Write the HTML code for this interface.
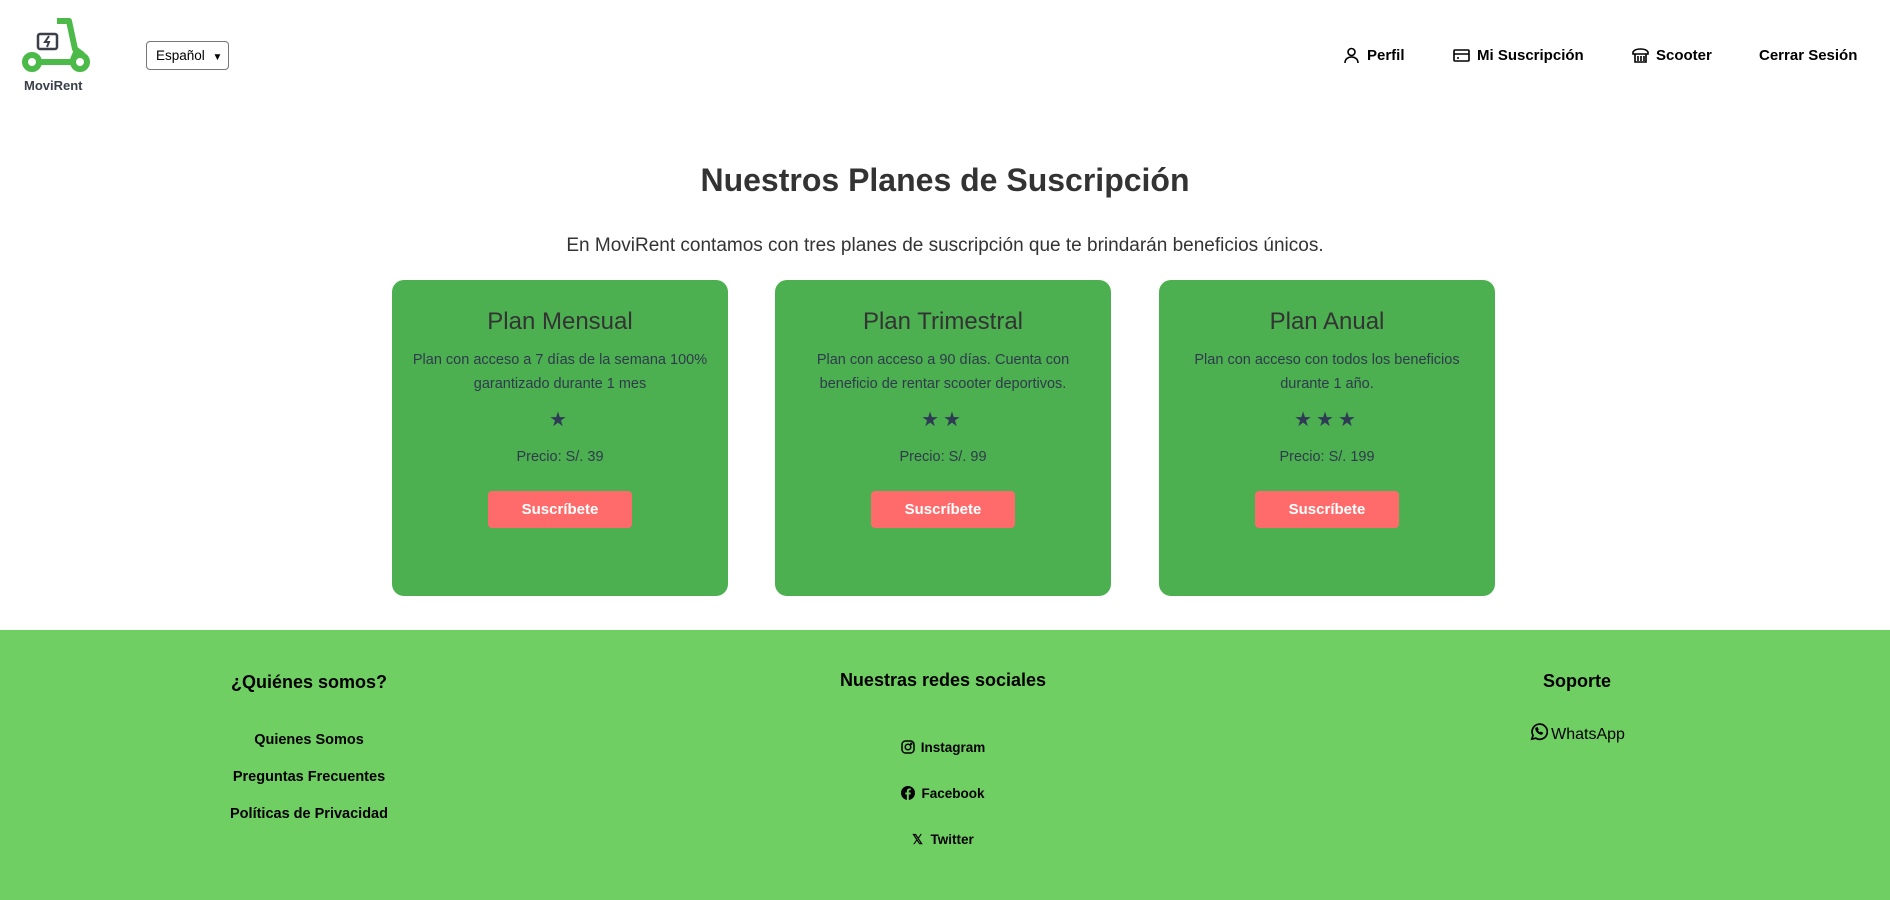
<!DOCTYPE html>
<html><head><meta charset="utf-8"><style>
*{margin:0;padding:0;box-sizing:border-box}
body{width:1890px;height:900px;background:#fff;font-family:"Liberation Sans",sans-serif;color:#000;position:relative;overflow:hidden}
.abs{position:absolute}
.nav{font-size:15px;font-weight:bold;top:47px;display:flex;align-items:center;gap:7px}
h1{position:absolute;top:162px;left:0;width:1890px;text-align:center;font-size:32px;color:#333;font-weight:bold}
.sub{position:absolute;top:235px;left:0;width:1890px;text-align:center;font-size:19px;color:#333}
.card{position:absolute;top:280px;width:336px;height:316px;background:#4caf50;border-radius:12px;text-align:center;color:#2f3b4c}
.card h2{font-size:24px;font-weight:normal;color:#333;margin-top:28px;height:30px}
.card .d{font-size:14.5px;line-height:24px;margin:10px 18px 0;height:48px}
.card .s{font-size:20px;margin-top:11px;height:24px;letter-spacing:4px;color:#2f3b55}
.card .p{font-size:14.5px;margin-top:18px}
.card .b{display:inline-block;margin-top:26px;width:144px;height:37px;line-height:37px;background:#ff6b6b;color:#fff;font-weight:bold;font-size:15px;border-radius:4px}
footer{position:absolute;top:630px;left:0;width:1890px;height:270px;background:#70cf63}
.c{position:absolute;text-align:center;font-weight:bold}
.h{font-size:18px}
.l{font-size:14.5px}
</style></head><body>
<svg class="abs" style="left:22px;top:16px" width="70" height="60" viewBox="0 0 70 60">
<path d="M35 5h12l6 28 8 6" fill="none" stroke="#4cba48" stroke-width="6" stroke-linejoin="round"/>
<path d="M10 46h40l5-12" fill="none" stroke="#4cba48" stroke-width="6"/>
<circle cx="10" cy="46" r="7" fill="#fff" stroke="#4cba48" stroke-width="6"/>
<circle cx="58" cy="46" r="7" fill="#fff" stroke="#4cba48" stroke-width="6"/>
<rect x="16" y="18" width="19" height="15" rx="2" fill="none" stroke="#3a3f4a" stroke-width="2.5"/>
<path d="M27 20l-4 6h4l-2 5" fill="none" stroke="#3a3f4a" stroke-width="2"/>
</svg>
<div class="abs" style="left:24px;top:78px;font-size:13px;font-weight:bold;color:#3a3f4a">MoviRent</div>
<div class="abs" style="left:146px;top:41px;width:83px;height:29px;border:1px solid #767676;border-radius:4px;font-size:13.5px;line-height:27px;padding-left:9px">Español <span style="font-size:10px;margin-left:4px">&#9660;</span></div>
<div class="nav abs" style="left:1343px"><svg width="17" height="17" viewBox="0 0 17 17" fill="none" stroke="#000" stroke-width="1.6"><circle cx="8.5" cy="5" r="3.5"/><path d="M2 16c0-4 3-6 6.5-6s6.5 2 6.5 6"/></svg>Perfil</div>
<div class="nav abs" style="left:1453px"><svg width="17" height="17" viewBox="0 0 17 17" fill="none" stroke="#000" stroke-width="1.6"><rect x="1" y="3" width="15" height="11" rx="1"/><path d="M1 7h15M4 11h2"/></svg>Mi Suscripción</div>
<div class="nav abs" style="left:1632px"><svg width="17" height="17" viewBox="0 0 17 17" fill="none" stroke="#000" stroke-width="1.6"><path d="M1 5c2-4 13-4 15 0v2H1zM3 7v8h11V7M6 9v5M9 9v5M12 9v5"/></svg>Scooter</div>
<div class="nav abs" style="left:1759px">Cerrar Sesión</div>
<h1>Nuestros Planes de Suscripción</h1>
<div class="sub">En MoviRent contamos con tres planes de suscripción que te brindarán beneficios únicos.</div>
<div class="card" style="left:392px"><h2>Plan Mensual</h2><div class="d">Plan con acceso a 7 días de la semana 100% garantizado durante 1 mes</div><div class="s">★</div><div class="p">Precio: S/. 39</div><div class="b">Suscríbete</div></div>
<div class="card" style="left:775px"><h2>Plan Trimestral</h2><div class="d">Plan con acceso a 90 días. Cuenta con beneficio de rentar scooter deportivos.</div><div class="s">★★</div><div class="p">Precio: S/. 99</div><div class="b">Suscríbete</div></div>
<div class="card" style="left:1159px"><h2>Plan Anual</h2><div class="d">Plan con acceso con todos los beneficios durante 1 año.</div><div class="s">★★★</div><div class="p">Precio: S/. 199</div><div class="b">Suscríbete</div></div>
<footer>
<div class="c h" style="left:159px;width:300px;top:42px">¿Quiénes somos?</div>
<div class="c l" style="left:159px;width:300px;top:102px">Quienes Somos</div>
<div class="c l" style="left:159px;width:300px;top:139px">Preguntas Frecuentes</div>
<div class="c l" style="left:159px;width:300px;top:176px">Políticas de Privacidad</div>
<div class="c h" style="left:793px;width:300px;top:40px">Nuestras redes sociales</div>
<div class="c l" style="left:793px;width:300px;top:110px;font-size:13.5px"><svg width="14" height="14" viewBox="0 0 14 14" style="vertical-align:-2px;margin-right:6px" fill="none" stroke="#000" stroke-width="1.5"><rect x="1" y="1" width="12" height="12" rx="3.5"/><circle cx="7" cy="7" r="2.8"/><circle cx="10.3" cy="3.7" r=".5" fill="#000"/></svg>Instagram</div>
<div class="c l" style="left:793px;width:300px;top:156px;font-size:13.5px"><svg width="14" height="14" viewBox="0 0 14 14" style="vertical-align:-2px;margin-right:6px"><circle cx="7" cy="7" r="7" fill="#000"/><path d="M7.8 14V8.5h1.7l.3-2H7.8V5.3c0-.6.2-1 1-1h1V2.6c-.3 0-.9-.1-1.5-.1-1.5 0-2.4.9-2.4 2.5v1.5H4.3v2h1.6V14z" fill="#70cf63"/></svg>Facebook</div>
<div class="c l" style="left:793px;width:300px;top:202px;font-size:13.5px">𝕏 &nbsp;Twitter</div>
<div class="c h" style="left:1427px;width:300px;top:41px">Soporte</div>
<div class="c" style="left:1427px;width:300px;top:92px;font-size:16px;font-weight:normal"><svg width="19" height="19" viewBox="0 0 20 20" style="vertical-align:-2px;margin-right:3px" fill="none" stroke="#000" stroke-width="1.8"><path d="M3 18l1.2-4A8 8 0 1 1 7 17z"/><path d="M7 6.5c0 3.5 3 6.5 6.5 6.5l1-1.5-2-1-1 .8c-1-.5-2-1.5-2.5-2.5l.8-1-1-2z" fill="#000" stroke-width="0.8"/></svg>WhatsApp</div>
</footer>
</body></html>
